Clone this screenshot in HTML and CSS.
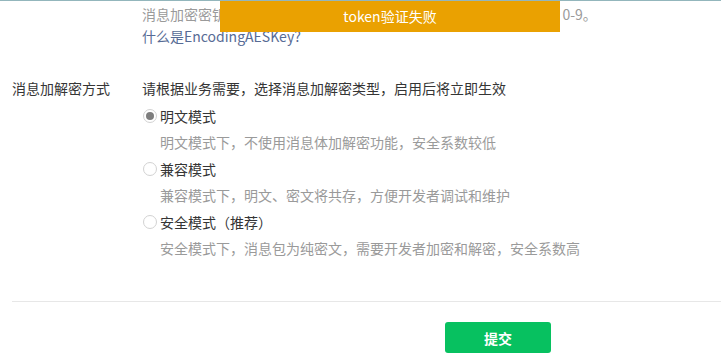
FILE: index.html
```html
<!DOCTYPE html>
<html lang="zh-CN">
<head>
    <meta charset="UTF-8">
    <title>消息加解密方式</title>
    <link rel="stylesheet" href="styles.css">
</head>
<body>
    <div class="page">
        <div class="form-row top-row">
            <div class="form-label"></div>
            <div class="form-body">
                <p class="tips">消息加密密钥由43位字符组成，可随机修改，字符范围为A-Z，a-z，0-9。</p>
                <a class="link" href="#">什么是EncodingAESKey?</a>
            </div>
        </div>

        <div class="form-row mode-row">
            <div class="form-label">消息加解密方式</div>
            <div class="form-body">
                <p class="intro">请根据业务需要，选择消息加解密类型，启用后将立即生效</p>
                <div class="option">
                    <label class="radio-line"><span class="radio checked"></span>明文模式</label>
                    <p class="desc">明文模式下，不使用消息体加解密功能，安全系数较低</p>
                </div>
                <div class="option">
                    <label class="radio-line"><span class="radio"></span>兼容模式</label>
                    <p class="desc">兼容模式下，明文、密文将共存，方便开发者调试和维护</p>
                </div>
                <div class="option">
                    <label class="radio-line"><span class="radio"></span>安全模式（推荐）</label>
                    <p class="desc">安全模式下，消息包为纯密文，需要开发者加密和解密，安全系数高</p>
                </div>
            </div>
        </div>

        <div class="divider"></div>

        <div class="footer">
            <button class="btn-primary">提交</button>
        </div>
    </div>

    <div class="toast">token验证失败</div>
</body>
</html>
```

FILE: styles.css
```css
* { margin: 0; padding: 0; box-sizing: border-box; }
body {
    font-family: "Noto Sans CJK SC", "Microsoft YaHei", sans-serif;
    font-size: 14px;
    color: #353535;
    background: #fff;
    border-top: 1px solid #93b6bc;
    overflow: hidden;
}
.page {
    padding: 2px 0 0 12px;
}
.form-row {
    display: grid;
    grid-template-columns: 130px 1fr;
}
.form-body {
    display: flex;
    flex-direction: column;
    align-items: flex-start;
}
.tips {
    line-height: 22px;
    color: #9a9a9a;
    white-space: nowrap;
}
.link {
    line-height: 22px;
    color: #576b95;
    text-decoration: none;
}
.mode-row {
    margin-top: 28px;
    line-height: 26px;
}
.intro {
    margin-bottom: 2px;
}
.option {
    margin-bottom: 1px;
}
.radio-line {
    display: flex;
    align-items: center;
    height: 26px;
    margin-left: 1px;
}
.radio {
    flex: 0 0 14px;
    width: 14px;
    height: 14px;
    border: 1px solid #d2d2d2;
    border-radius: 50%;
    margin-right: 3px;
    display: flex;
    align-items: center;
    justify-content: center;
}
.radio.checked::after {
    content: "";
    width: 8px;
    height: 8px;
    border-radius: 50%;
    background: #7d7d7d;
}
.desc {
    padding-left: 18px;
    color: #9a9a9a;
}
.divider {
    margin-top: 39px;
    height: 1px;
    background: #e7e7e7;
}
.footer {
    padding: 20px 0 0 433px;
}
.btn-primary {
    width: 106px;
    height: 31px;
    border: none;
    border-radius: 3px;
    background: #07c160;
    color: #fff;
    font-family: inherit;
    font-size: 14px;
    font-weight: bold;
}
.toast {
    position: absolute;
    top: 1px;
    left: 220px;
    width: 340px;
    height: 31px;
    line-height: 31px;
    background: #eaa101;
    color: #fff;
    text-align: center;
    font-size: 14px;
}
```
